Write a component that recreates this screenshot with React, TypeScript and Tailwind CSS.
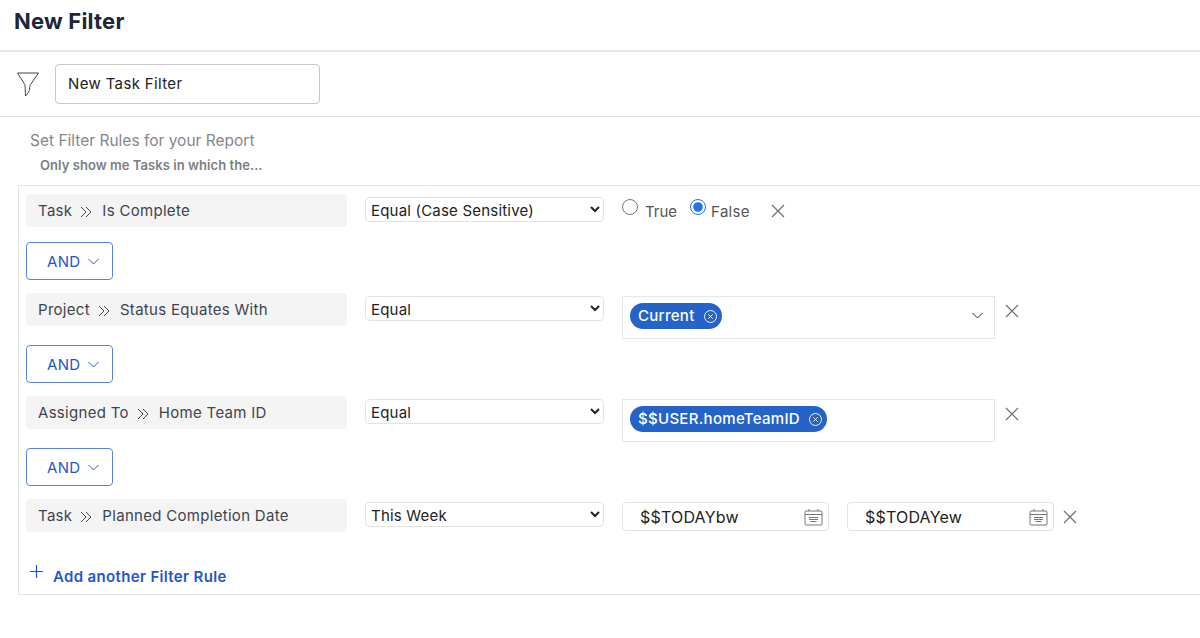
import React from 'react';

function ChevronsIcon() {
  return (
    <svg className="ml-[8px] mr-[10px] shrink-0" width="12" height="12" viewBox="0 0 12 12" fill="none" stroke="#4b4b4b" strokeWidth="1">
      <path d="M1 1l5 5-5 5M6 1l5 5-5 5" />
    </svg>
  );
}

function ChevronIcon({ className, stroke }: { className: string; stroke: string }) {
  return (
    <svg className={className} width="11" height="7" viewBox="0 0 11 7" fill="none" stroke={stroke} strokeWidth="1">
      <path d="M0.5 1l5 5 5-5" />
    </svg>
  );
}

function RuleLabel({ left, right }: { left: string; right: string }) {
  return (
    <div className="w-[321px] h-[33px] shrink-0 flex items-center rounded-sm bg-[#f4f4f4] pl-3 pt-[2px] text-[15px] tracking-[0.3px] text-[#3f4450]">
      <span>{left}</span>
      <ChevronsIcon />
      <span>{right}</span>
    </div>
  );
}

function Operator({ value }: { value: string }) {
  return (
    <select
      defaultValue={value}
      className="w-[239px] h-[25px] shrink-0 ml-[18px] mt-[3px] rounded-sm border border-[#e3e3e3] bg-white pl-px pt-px text-[15px] tracking-[0.2px] text-[#222]"
    >
      <option>{value}</option>
    </select>
  );
}

function AndButton() {
  return (
    <div className="w-[87px] h-[38px] flex items-center rounded-sm border border-[#5b82dc] pl-5 text-[15px] text-[#1f56d0]">
      <span className="pt-[2px] tracking-[0.3px]">AND</span>
      <ChevronIcon className="ml-[8px]" stroke="#1f56d0" />
    </div>
  );
}

function RemoveButton({ className }: { className: string }) {
  return (
    <svg className={`shrink-0 ${className}`} width="14" height="14" viewBox="0 0 14 14" fill="none" stroke="#6e6e6e" strokeWidth="1.2">
      <path d="M1 1l12 12M13 1L1 13" />
    </svg>
  );
}

function Tag({ label }: { label: string }) {
  return (
    <div className="h-[26px] inline-flex items-center rounded-full bg-[#2563c9] pl-2 pr-[3px] text-[15px] font-medium tracking-[0.3px] text-white">
      <span>{label}</span>
      <svg className="ml-[8px] mr-[1px]" width="15" height="15" viewBox="0 0 15 15" fill="none" stroke="white">
        <circle cx="7.5" cy="7.5" r="6" strokeWidth="0.9" />
        <path d="M5.3 5.3l4.4 4.4M9.7 5.3l-4.4 4.4" strokeWidth="0.9" />
      </svg>
    </div>
  );
}

function TagBox({ label, chevron }: { label: string; chevron?: boolean }) {
  return (
    <div className="w-[373px] h-[43px] shrink-0 ml-[18px] mt-[3px] flex items-start justify-between border border-[#e6e6e6] pl-[7px] pt-[6px] pr-[11px]">
      <Tag label={label} />
      {chevron && <ChevronIcon className="mt-[9px]" stroke="#333" />}
    </div>
  );
}

function CalendarIcon() {
  return (
    <svg width="19" height="18" viewBox="0 0 19 18" fill="none" stroke="#777" strokeWidth="1">
      <rect x="1" y="3" width="17" height="14" rx="1" />
      <path d="M1 6.5h17M5 1v2M14 1v2M5 9.5h9M5 11.5h9M6.5 13.5h6" />
    </svg>
  );
}

function DateInput({ value }: { value: string }) {
  return (
    <div className="w-[207px] h-[29px] shrink-0 ml-[18px] mt-[3px] flex items-center justify-between rounded-sm border border-[#e3e3e3] pl-[17px] pr-[5px] text-[16px] tracking-[0.2px] text-[#222]">
      <span className="pt-px">{value}</span>
      <CalendarIcon />
    </div>
  );
}

export default function App() {
  return (
    <div className="w-[1200px] h-[638px] bg-white overflow-hidden font-['Inter',sans-serif]">
      <div className="h-[52px] border-b-2 border-[#e8e8e8] pl-[14px] pt-[7px]">
        <h1 className="text-[22px] leading-[28px] tracking-[0.2px] font-bold text-[#20263a]">New Filter</h1>
      </div>

      <div className="h-[65px] flex items-center border-b border-[#e3e3e3] pl-[17px]">
        <svg width="22" height="25" viewBox="0 0 22 25" fill="none" stroke="#444" strokeWidth="1" strokeLinejoin="round">
          <path d="M0.5 1h21l-8 11.5c-0.8 1.2-0.8 3-0.8 4.5 0 2-1.8 4-4.2 7-0.3-3-0.2-7-0.5-10.5-0.1-1-0.3-1.5-0.8-2z" />
        </svg>
        <div className="w-[265px] h-[40px] ml-4 flex items-center rounded border border-[#c9c9c9] pl-3 text-[15px] tracking-[0.35px] text-[#222]">
          New Task Filter
        </div>
      </div>

      <div className="pl-[30px] pt-[14px] text-[15.5px] leading-[20px] text-[#85878c]">Set Filter Rules for your Report</div>
      <div className="pl-10 pt-[6px] text-[13px] leading-[16px] tracking-[0.06px] font-semibold text-[#7c7e84]">Only show me Tasks in which the...</div>

      <div className="h-[410px] ml-[18px] mt-[12px] border-t border-l border-b border-[#e3e3e3] pl-[7px] pt-2">
        <div className="flex items-start h-[34px]">
          <RuleLabel left="Task" right="Is Complete" />
          <Operator value="Equal (Case Sensitive)" />
          <label className="flex items-start ml-[18px] mt-[5px] text-[15px] text-[#555]">
            <input type="radio" name="complete" className="w-4 h-4 m-0 accent-[#2670e8]" />
            <span className="ml-[7px] mt-[3px] leading-[20px]">True</span>
          </label>
          <label className="flex items-start ml-[13px] mt-[5px] text-[15px] tracking-[0.3px] text-[#555]">
            <input type="radio" name="complete" defaultChecked className="w-4 h-4 m-0 accent-[#2670e8]" />
            <span className="ml-[5px] mt-[3px] leading-[20px]">False</span>
          </label>
          <RemoveButton className="ml-[21px] mt-[10px]" />
        </div>

        <div className="mt-[14px] mb-[13px]"><AndButton /></div>

        <div className="flex items-start h-[34px]">
          <RuleLabel left="Project" right="Status Equates With" />
          <Operator value="Equal" />
          <TagBox label="Current" chevron />
          <RemoveButton className="ml-[10px] mt-[11px]" />
        </div>

        <div className="mt-[18px] mb-[13px]"><AndButton /></div>

        <div className="flex items-start h-[34px]">
          <RuleLabel left="Assigned To" right="Home Team ID" />
          <Operator value="Equal" />
          <TagBox label="$$USER.homeTeamID" />
          <RemoveButton className="ml-[10px] mt-[11px]" />
        </div>

        <div className="mt-[18px] mb-[13px]"><AndButton /></div>

        <div className="flex items-start h-[34px]">
          <RuleLabel left="Task" right="Planned Completion Date" />
          <Operator value="This Week" />
          <DateInput value="$$TODAYbw" />
          <DateInput value="$$TODAYew" />
          <RemoveButton className="ml-[9px] mt-[11px]" />
        </div>

        <div className="flex items-start mt-[32px] pl-[4px] text-[#1f56d0]">
          <svg width="13" height="13" viewBox="0 0 13 13" fill="none" stroke="#1f56d0" strokeWidth="1.2">
            <path d="M6.5 0v13M0 6.5h13" />
          </svg>
          <span className="ml-[10px] mt-[2px] text-[15px] leading-[20px] tracking-[0.35px] font-semibold">Add another Filter Rule</span>
        </div>
      </div>
    </div>
  );
}
